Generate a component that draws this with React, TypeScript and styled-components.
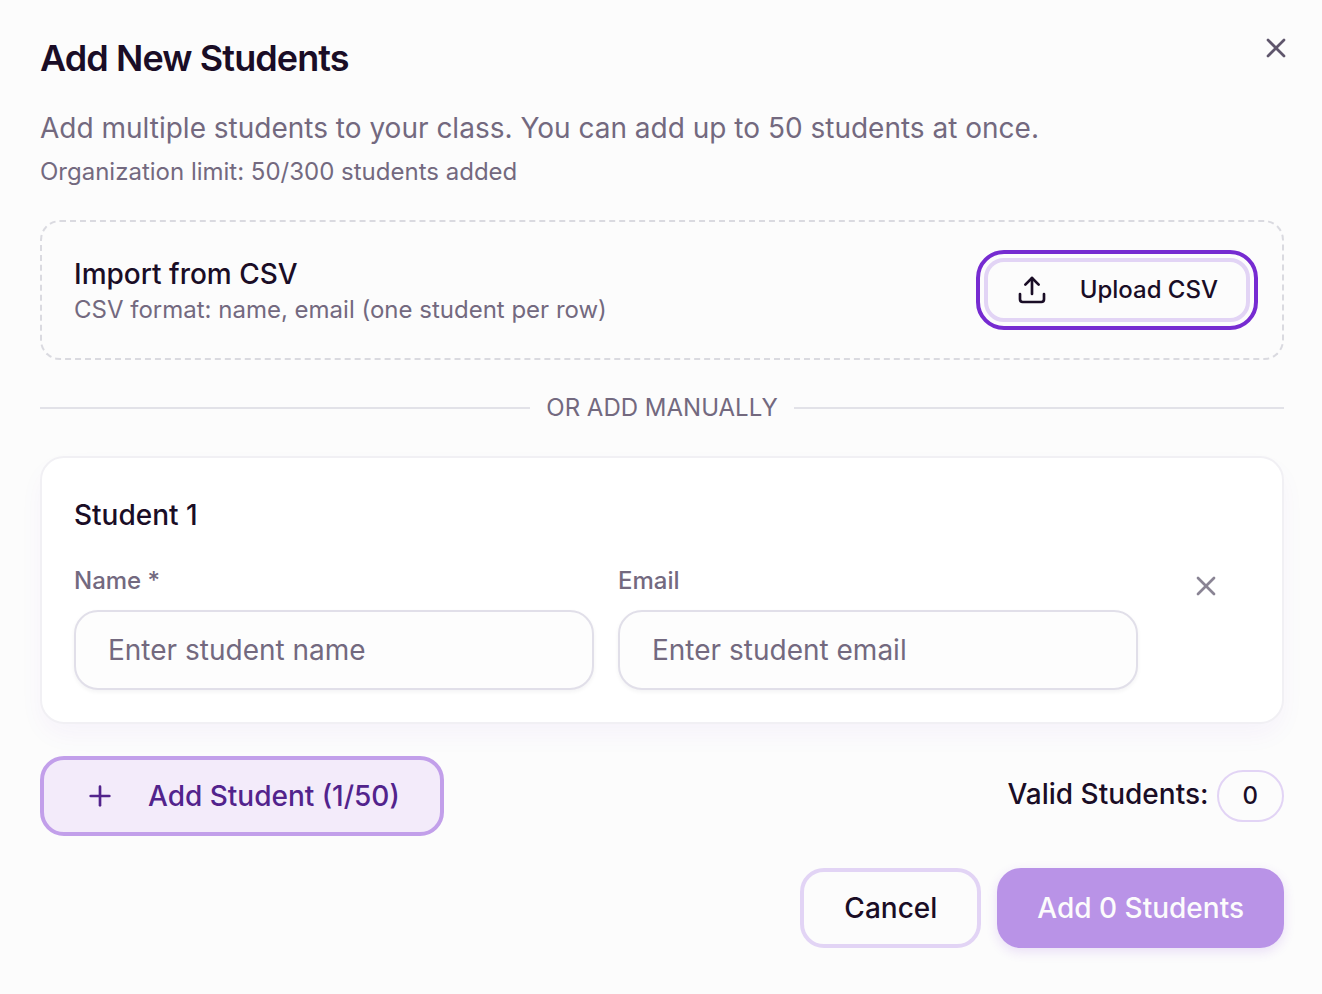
import React, { useState } from "react";
import styled, { createGlobalStyle, css } from "styled-components";
import { Plus, Upload, X } from "lucide-react";

const color = {
  surface: "#fcfcfc",
  ink: "#1a0d26",
  muted: "#73697f",
  line: "#dadae0",
  lavender: "#e2d4f5",
  violet: "#762bd1",
};

const GlobalStyle = createGlobalStyle`
  *, *::before, *::after { box-sizing: border-box; }
  body {
    margin: 0;
    background: ${color.surface};
    color: ${color.ink};
    font-family: Inter, "Liberation Sans", sans-serif;
    font-size: 28px;
    line-height: 40px;
  }
  h2, h3, p { margin: 0; }
  button, input { font: inherit; color: inherit; }
  button { cursor: pointer; }
`;

const Dialog = styled.main`
  position: relative;
  display: flex;
  flex-direction: column;
  gap: 32px;
  padding: 40px 38px 46px 40px;
  background: ${color.surface};
`;

const CloseButton = styled.button`
  position: absolute;
  top: 32px;
  right: 30px;
  display: flex;
  padding: 0;
  border: 0;
  background: none;
  color: #5f566c;
`;

const Header = styled.header`
  display: flex;
  flex-direction: column;
`;

const Title = styled.h2`
  margin-bottom: 32px;
  font-size: 36px;
  line-height: 36px;
  font-weight: 600;
  letter-spacing: -0.025em;
`;

const Description = styled.p`
  margin-bottom: 8px;
  color: ${color.muted};
`;

const SmallText = styled.p`
  font-size: 24px;
  line-height: 32px;
  color: ${color.muted};
`;

const ImportPanel = styled.section`
  display: flex;
  align-items: center;
  justify-content: space-between;
  gap: 24px;
  padding: 32px;
  border: 2px dashed ${color.line};
  border-radius: 20px;
`;

const PanelTitle = styled.h3`
  font-size: 28px;
  line-height: 40px;
  font-weight: 500;
`;

const Button = styled.button<{ $variant?: "outline" | "soft" | "solid"; $small?: boolean }>`
  display: inline-flex;
  align-items: center;
  justify-content: center;
  gap: 32px;
  height: 80px;
  padding: 0 40px;
  border: 4px solid ${color.lavender};
  border-radius: 24px;
  background: ${color.surface};
  font-weight: 500;
  white-space: nowrap;

  ${({ $small }) =>
    $small &&
    css`
      height: 64px;
      padding: 0 28px;
      border-radius: 20px;
      font-size: 24px;
    `}
  ${({ $variant }) =>
    $variant === "soft" &&
    css`
      border-color: #c29fea;
      background: #f3ebfa;
      color: #52238c;
    `}
  ${({ $variant }) =>
    $variant === "solid" &&
    css`
      border: 0;
      background: #b993e7;
      color: #fcfcfc;
      box-shadow: 0 4px 12px rgba(118, 43, 209, 0.14);
    `}
  &:focus-visible {
    outline: 4px solid ${color.violet};
    outline-offset: 4px;
  }
`;

const Divider = styled.div`
  display: flex;
  align-items: center;
  gap: 16px;
  font-size: 24px;
  line-height: 32px;
  color: ${color.muted};
  text-transform: uppercase;

  &::before,
  &::after {
    content: "";
    flex: 1;
    height: 2px;
    background: #e2e2e8;
  }
`;

const StudentCard = styled.section`
  padding: 32px;
  border: 2px solid #f1f0f4;
  border-radius: 24px;
  background: #ffffff;
  box-shadow: 0 12px 28px -4px rgba(118, 43, 209, 0.05);
`;

const CardHeader = styled.div`
  display: flex;
  align-items: center;
  height: 50px;
  margin-bottom: 22px;
`;

const FieldRow = styled.div`
  display: grid;
  grid-template-columns: 1fr 1fr auto;
  gap: 24px;
`;

const Field = styled.label`
  display: flex;
  flex-direction: column;
  gap: 10px;
  min-width: 0;
  font-size: 24px;
  line-height: 38px;
  font-weight: 500;
  color: ${color.muted};
`;

const Input = styled.input`
  width: 100%;
  height: 80px;
  padding: 0 32px;
  border: 2px solid #e1dfe9;
  border-radius: 24px;
  outline: none;
  background: #fdfdfd;
  box-shadow: 0 2px 4px rgba(26, 13, 38, 0.05);
  font-size: 28px;
  font-weight: 400;
  color: ${color.ink};

  &::placeholder {
    color: ${color.muted};
    opacity: 1;
  }
`;

const RemoveButton = styled.button`
  display: flex;
  align-items: center;
  justify-content: center;
  width: 88px;
  height: 48px;
  padding: 0;
  border: 0;
  background: none;
  color: #8a8494;
`;

const SummaryRow = styled.div`
  display: flex;
  align-items: center;
  justify-content: space-between;
`;

const ValidCount = styled.div`
  display: flex;
  align-items: baseline;
  gap: 8px;
  font-weight: 500;
`;

const Badge = styled.span`
  padding: 8px 24px;
  border: 2px solid ${color.lavender};
  border-radius: 26px;
  font-size: 24px;
  line-height: 32px;
`;

const Footer = styled.footer`
  display: flex;
  justify-content: flex-end;
  gap: 16px;
`;

export default function App() {
  const [name, setName] = useState("");
  const [email, setEmail] = useState("");
  const valid = name.trim() ? 1 : 0;

  return (
    <>
      <GlobalStyle />
      <Dialog role="dialog" aria-labelledby="dialog-title">
        <Header>
          <Title id="dialog-title">Add New Students</Title>
          <Description>
            Add multiple students to your class. You can add up to 50 students at once.
          </Description>
          <SmallText>Organization limit: 50/300 students added</SmallText>
        </Header>

        <ImportPanel>
          <div>
            <PanelTitle>Import from CSV</PanelTitle>
            <SmallText>CSV format: name, email (one student per row)</SmallText>
          </div>
          <Button type="button" $small autoFocus>
            <Upload size={32} />
            Upload CSV
          </Button>
        </ImportPanel>

        <Divider>Or add manually</Divider>

        <StudentCard>
          <CardHeader>
            <PanelTitle>Student 1</PanelTitle>
          </CardHeader>
          <FieldRow>
            <Field>
              Name *
              <Input
                type="text"
                placeholder="Enter student name"
                value={name}
                onChange={(e) => setName(e.target.value)}
              />
            </Field>
            <Field>
              Email
              <Input
                type="email"
                placeholder="Enter student email"
                value={email}
                onChange={(e) => setEmail(e.target.value)}
              />
            </Field>
            <RemoveButton type="button" aria-label="Remove student">
              <X size={32} />
            </RemoveButton>
          </FieldRow>
        </StudentCard>

        <SummaryRow>
          <Button type="button" $variant="soft">
            <Plus size={32} />
            Add Student (1/50)
          </Button>
          <ValidCount>
            Valid Students:
            <Badge>{valid}</Badge>
          </ValidCount>
        </SummaryRow>

        <Footer>
          <Button type="button">Cancel</Button>
          <Button type="submit" $variant="solid">
            Add {valid} Students
          </Button>
        </Footer>

        <CloseButton type="button" aria-label="Close">
          <X size={32} />
        </CloseButton>
      </Dialog>
    </>
  );
}
